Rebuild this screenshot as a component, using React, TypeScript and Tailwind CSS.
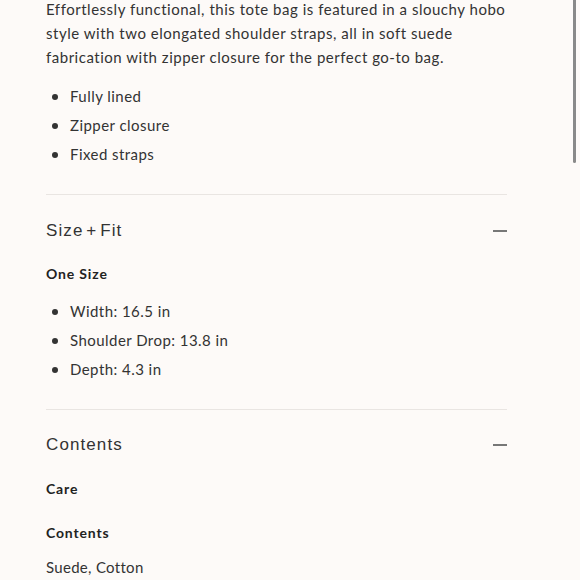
import React from "react";

const body = { fontFamily: "Lato, 'Liberation Sans', sans-serif" };
const head = { fontFamily: "'Liberation Sans', Arial, sans-serif" };

function Bullets({ items }: { items: string[] }) {
  return (
    <ul className="flex flex-col">
      {items.map((t) => (
        <li key={t} className="flex items-center h-[29px] text-[15px] tracking-[0.45px] text-[#333]">
          <span className="w-[24px] flex justify-start pl-[6px]">
            <span className="block w-[6px] h-[6px] rounded-full bg-[#333]" />
          </span>
          <span className="whitespace-nowrap">{t}</span>
        </li>
      ))}
    </ul>
  );
}

function Minus() {
  return <span className="block w-[14px] h-[2px] bg-[#777]" />;
}

export default function App() {
  return (
    <div className="relative min-h-[580px] h-[580px] overflow-hidden bg-[#fdfaf8]" style={body}>
      <div className="ml-[46px] w-[461px] -mt-[3px]">
        <p className="text-[15px] leading-[24px] tracking-[0.52px] text-[#333]">
          <span className="block whitespace-nowrap">Effortlessly functional, this tote bag is featured in a slouchy hobo</span>
          <span className="block whitespace-nowrap">style with two elongated shoulder straps, all in soft suede</span>
          <span className="block whitespace-nowrap">fabrication with zipper closure for the perfect go-to bag.</span>
        </p>
        <div className="mt-[13px]">
          <Bullets items={["Fully lined", "Zipper closure", "Fixed straps"]} />
        </div>
        <div className="mt-[25px] border-t border-[#e9e5e2]" />
        <div className="flex items-center justify-between h-[24px] mt-[24px]">
          <span className="text-[17px] tracking-[1.1px] [word-spacing:-3px] text-[#333]" style={head}>Size + Fit</span>
          <Minus />
        </div>
        <div className="mt-[20px] h-[20px] flex items-center text-[14px] font-bold tracking-[0.85px] text-[#222]">One Size</div>
        <div className="mt-[14px]">
          <Bullets items={["Width: 16.5 in", "Shoulder Drop: 13.8 in", "Depth: 4.3 in"]} />
        </div>
        <div className="mt-[25px] border-t border-[#e9e5e2]" />
        <div className="flex items-center justify-between h-[24px] mt-[23px]">
          <span className="text-[17px] tracking-[1.1px] text-[#333]" style={head}>Contents</span>
          <Minus />
        </div>
        <div className="mt-[21px] h-[20px] flex items-center text-[14px] font-bold tracking-[0.85px] text-[#222]">Care</div>
        <div className="mt-[24px] h-[20px] flex items-center text-[14px] font-bold tracking-[0.85px] text-[#222]">Contents</div>
        <div className="mt-[15px] h-[20px] flex items-center text-[15px] tracking-[0.3px] text-[#333]">Suede, Cotton</div>
      </div>
      <div className="absolute right-[4px] top-0 w-[3px] h-[163px] bg-[#8a8a8a] rounded-b-sm" />
    </div>
  );
}
